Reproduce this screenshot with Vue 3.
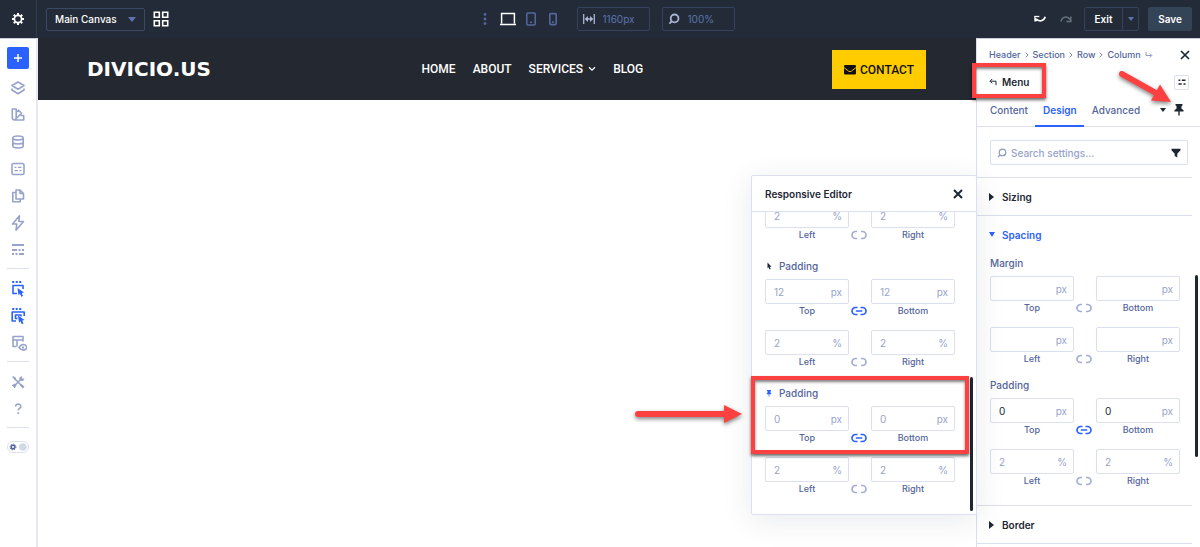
<template>
  <div class="builder">
    <header class="topbar">
      <button class="topbar__settings" aria-label="Settings">
        <svg width="14" height="14" viewBox="0 0 14 14">
          <circle cx="7" cy="7" r="3.6" fill="none" stroke="#fff" stroke-width="1.7" />
          <path d="M7 1v2M7 11v2M1 7h2M11 7h2M2.8 2.8l1.4 1.4M9.8 9.8l1.4 1.4M2.8 11.2l1.4-1.4M9.8 4.2l1.4-1.4" stroke="#fff" stroke-width="2" />
        </svg>
      </button>
      <div class="canvas-select">
        <select v-model="canvas" aria-label="Canvas">
          <option>Main Canvas</option>
        </select>
        <i class="caret"></i>
      </div>
      <button class="icon-btn" aria-label="Grid view">
        <svg width="16" height="16" viewBox="0 0 16 16" fill="none" stroke="#fff" stroke-width="1.6">
          <path d="M1.3 1.3h5v5h-5zM9.7 1.3h5v5h-5zM1.3 9.7h5v5h-5zM9.7 9.7h5v5h-5z" />
        </svg>
      </button>

      <div class="topbar__view">
        <button class="icon-btn" aria-label="More">
          <svg width="4" height="14" viewBox="0 0 4 14" fill="#5468a0">
            <circle cx="2" cy="2.4" r="1.4" /><circle cx="2" cy="7" r="1.4" /><circle cx="2" cy="11.6" r="1.4" />
          </svg>
        </button>
        <button class="icon-btn icon-btn--desktop" aria-label="Desktop">
          <svg width="16" height="14" viewBox="0 0 16 14" fill="none" stroke="#fff" stroke-width="1.5">
            <path d="M1.6 11.5v-10h12.8v10M0 12.6h16" />
          </svg>
        </button>
        <button class="icon-btn icon-btn--tablet" aria-label="Tablet">
          <svg width="10" height="14" viewBox="0 0 10 14" fill="none" stroke="#5468a0" stroke-width="1.5">
            <rect x="0.8" y="1" width="8.4" height="12" rx="1" /><path d="M4 10.2h2" />
          </svg>
        </button>
        <button class="icon-btn icon-btn--phone" aria-label="Phone">
          <svg width="8" height="14" viewBox="0 0 8 14" fill="none" stroke="#5468a0" stroke-width="1.6">
            <rect x="0.8" y="1.6" width="6.4" height="11" rx="1" /><path d="M3 10h2" />
          </svg>
        </button>
        <label class="measure">
          <svg width="12" height="12" viewBox="0 0 12 12" fill="none" stroke="#aab4d4" stroke-width="1.3">
            <path d="M.7 1v10M11.3 1v10M3 6h6" /><path d="M5 3L1.600 6 5 9zM7 3l3.400 3L7 9z" fill="#aab4d4" stroke="none" />
          </svg>
          <input v-model="width" aria-label="Canvas width" />
        </label>
        <label class="measure">
          <svg width="12" height="12" viewBox="0 0 12 12" fill="none" stroke="#aab4d4" stroke-width="1.8">
            <circle cx="6.6" cy="5.4" r="3.9" /><path d="M4 8L1.4 10.6" />
          </svg>
          <input v-model="zoom" aria-label="Zoom" />
        </label>
      </div>

      <div class="topbar__actions">
        <button class="icon-btn" aria-label="Undo">
          <svg width="12" height="10" viewBox="0 0 12 10">
            <path d="M2.200 5C5 8 9.500 7.500 11.300 2.800" fill="none" stroke="#fff" stroke-width="1.700" /><path d="M.3 2v5.500h1.800L4.800 5.800 2.200 4.500z" fill="#fff" />
            <path d="M.3 2.500h5" stroke="#fff" stroke-width="1.300" />
          </svg>
        </button>
        <button class="icon-btn" aria-label="Redo">
          <svg width="12" height="10" viewBox="0 0 12 10">
            <path d="M.8 7.5C2.500 2 7.500 2 10 5.5" fill="none" stroke="#6b7482" stroke-width="1.500" /><path d="M10.800 2.500v5H6.500" fill="none" stroke="#6b7482" stroke-width="1.400" />
          </svg>
        </button>
        <div class="exit">
          <button class="exit__main">Exit</button>
          <button class="exit__more" aria-label="Exit options"><i class="caret caret--small"></i></button>
        </div>
        <button class="save">Save</button>
      </div>
    </header>

    <div class="workspace">
      <aside class="rail">
        <button class="rail__add" aria-label="Add">
          <svg width="10" height="10" viewBox="0 0 10 10" stroke="#fff" stroke-width="1.5"><path d="M5 1v8M1 5h8" /></svg>
        </button>
        <div v-for="(group, g) in railGroups" :key="g" class="rail__group">
          <button v-for="item in group" :key="item.name" class="rail__btn" :class="{ 'rail__btn--on': item.on }" :aria-label="item.name">
            <svg width="18" height="18" viewBox="0 0 18 18">
              <path v-if="item.line" :d="item.line" class="line" />
              <path v-if="item.fill" :d="item.fill" class="fill" />
            </svg>
          </button>
        </div>
        <button class="rail__toggle" aria-label="Dark mode">
          <svg width="20" height="10" viewBox="0 0 20 10">
            <circle cx="5" cy="5" r="1.8" fill="none" stroke="#5468a0" stroke-width="1.5" />
            <circle cx="5" cy="5" r="2.900" fill="none" stroke="#5468a0" stroke-width="1" stroke-dasharray="1.2 1.1" />
            <circle cx="14.800" cy="5" r="3.800" fill="#d3d8e8" />
          </svg>
        </button>
      </aside>

      <main class="canvas">
        <div class="site-header">
          <a href="#" class="site-logo">DIVICIO.US</a>
          <nav class="site-nav">
            <a href="#">HOME</a>
            <a href="#">ABOUT</a>
            <a href="#">
              SERVICES
              <svg width="8" height="6" viewBox="0 0 8 6" fill="none" stroke="#fff" stroke-width="1.3"><path d="M1 1.2l3 3 3-3" /></svg>
            </a>
            <a href="#">BLOG</a>
          </nav>
          <a href="#" class="site-contact">
            <svg width="12" height="10" viewBox="0 0 12 10">
              <rect width="12" height="9.5" rx="1.3" fill="#111" />
              <path d="M0 2.6L4.7 6.200q1.300.9 2.600 0L12 2.600" fill="none" stroke="#ffcc00" stroke-width="0.9" />
            </svg>
            CONTACT
          </a>
        </div>
      </main>

      <aside class="panel">
        <div class="panel__crumbs">
          <template v-for="(crumb, i) in crumbs" :key="crumb">
            <svg v-if="i" width="4" height="6" viewBox="0 0 4 6" fill="none" stroke="#7d8ab5"><path d="M.8.7L3 3 .8 5.300" /></svg>
            <a href="#">{{ crumb }}</a>
          </template>
          <svg class="crumb-end" width="8" height="8" viewBox="0 0 8 8" fill="none" stroke="#8e9ac2"><path d="M1 1v3.500h5.500M4.800 2.500l2 2-2 2" /></svg>
          <button class="icon-btn panel__close" aria-label="Close">
            <svg width="10" height="10" viewBox="0 0 10 10" stroke="#1d2733" stroke-width="1.7"><path d="M1 1l8 8M9 1L1 9" /></svg>
          </button>
        </div>

        <div class="panel__title">
          <button class="panel__back">
            <svg width="8" height="8" viewBox="0 0 8 8" fill="none" stroke="#1d2733"><path d="M7 7.2V3.200H1.300M3.200 1L1 3.200l2.200 2.200" /></svg>
            Menu
          </button>
          <button class="panel__presets" aria-label="Presets">
            <svg width="8" height="8" viewBox="0 0 8 8" stroke="#1d2733" stroke-width="1.4"><path d="M.5 2.200h1.800M3.800 2.200h3.700M.5 6h3.200M5.500 6h2" /></svg>
          </button>
          <div class="mark mark--menu"></div>
        </div>

        <div class="tabs">
          <button v-for="tab in tabs" :key="tab" class="tabs__tab" :class="{ 'tabs__tab--active': tab === activeTab }" @click="activeTab = tab">
            {{ tab }}
          </button>
          <button class="icon-btn tabs__pin" aria-label="State">
            <i class="caret caret--dark"></i>
            <svg width="10" height="12" viewBox="0 0 10 12" fill="#1d2733"><path d="M1.500 0h7v1.500l-1 .5v2.800L9.500 6v1.600H5.700V11L5 12l-.7-1V7.600H.5V6l2-1.200V2l-1-.5z" /></svg>
          </button>
        </div>

        <div class="search-wrap">
          <label class="search">
            <svg width="10" height="10" viewBox="0 0 10 10" fill="none" stroke="#8e9ac2" stroke-width="1.2"><circle cx="5.5" cy="4.4" r="3.3" /><path d="M3.200 6.800L1 9" /></svg>
            <input v-model="query" placeholder="Search settings..." aria-label="Search settings" />
            <svg width="10" height="10" viewBox="0 0 10 10" fill="#1d2733"><path d="M.5.8h9v1.400L6.300 5.800v3.700L3.700 8V5.800L.5 2.200z" /></svg>
          </label>
        </div>

        <section class="group">
          <button class="group__head"><i class="arrow"></i>Sizing</button>
        </section>

        <section class="group">
          <button class="group__head group__head--open"><i class="arrow arrow--down"></i>Spacing</button>
          <div class="group__body">
            <div v-for="block in panelBlocks" :key="block.id" class="block">
              <div class="block__label">{{ block.title }}</div>
              <div v-for="(row, r) in block.rows" :key="r" class="pair">
                <div v-for="field in row.fields" :key="field.name" class="field">
                  <div class="field__box">
                    <input :id="block.id + field.name" v-model="field.value" :placeholder="field.hint" />
                    <span>{{ row.unit }}</span>
                  </div>
                  <label :for="block.id + field.name">{{ field.name }}</label>
                </div>
                <button class="pair__link" :class="{ 'pair__link--on': row.linked }" aria-label="Link values" @click="row.linked = !row.linked">
                  <svg width="16" height="10" viewBox="0 0 16 10"><path :d="row.linked ? linkOn : linkOff" /></svg>
                </button>
              </div>
            </div>
          </div>
        </section>

        <section class="group">
          <button class="group__head"><i class="arrow"></i>Border</button>
        </section>
        <div class="scrollbar scrollbar--panel"></div>
      </aside>

      <div class="editor" role="dialog" aria-label="Responsive Editor">
        <div class="editor__head">
          <h2>Responsive Editor</h2>
          <button class="icon-btn" aria-label="Close editor">
            <svg width="10" height="10" viewBox="0 0 10 10" stroke="#1d2733" stroke-width="2"><path d="M1 1l8 8M9 1L1 9" /></svg>
          </button>
        </div>
        <div class="editor__body">
          <div v-for="block in editorBlocks" :key="block.id" class="block">
            <div v-if="block.title" class="block__label block__label--state">
              <svg v-if="block.state === 'hover'" width="8" height="8" viewBox="0 0 8 8" fill="#1d2733"><path d="M2.500.5l4 4.200-1.800.1 1 2.200-1.200.6-1-2.300-1 .9z" /></svg>
              <svg v-else width="8" height="8" viewBox="0 0 8 8" fill="#2b62ff"><path d="M2 1h4v.9l-.5.3v1.500l.8.7v.8H4.400V7.500h-.8V5.200H1.700v-.8l.8-.7V2.200L2 1.900z" /></svg>
              {{ block.title }}
            </div>
            <div v-for="(row, r) in block.rows" :key="r" class="pair">
              <div v-for="field in row.fields" :key="field.name" class="field">
                <div class="field__box">
                  <input :id="block.id + field.name" v-model="field.value" :placeholder="field.hint" />
                  <span>{{ row.unit }}</span>
                </div>
                <label :for="block.id + field.name">{{ field.name }}</label>
              </div>
              <button class="pair__link" :class="{ 'pair__link--on': row.linked }" aria-label="Link values" @click="row.linked = !row.linked">
                <svg width="16" height="10" viewBox="0 0 16 10"><path :d="row.linked ? linkOn : linkOff" /></svg>
              </button>
            </div>
          </div>
        </div>
        <div class="scrollbar scrollbar--editor"></div>
        <div class="mark mark--padding"></div>
        <svg class="pointer pointer--padding" width="112" height="24" viewBox="0 0 112 24">
          <path d="M5 12h87" stroke="#fd4040" stroke-width="6" stroke-linecap="round" /><path d="M91 3l18 9-18 9z" fill="#fd4040" />
        </svg>
      </div>

      <svg class="pointer pointer--pin" width="60" height="40" viewBox="0 0 60 40">
        <path d="M7 6l34 19" stroke="#fd4040" stroke-width="6" stroke-linecap="round" /><path d="M56 34l-20-1.500 9-16z" fill="#fd4040" />
      </svg>
    </div>
  </div>
</template>

<script setup>
import { ref } from 'vue'

const canvas = ref('Main Canvas')
const width = ref('1160px')
const zoom = ref('100%')
const query = ref('')
const activeTab = ref('Design')

const crumbs = ['Header', 'Section', 'Row', 'Column']
const tabs = ['Content', 'Design', 'Advanced']

const linkOn = 'M6.500 1.500H4.500a3.500 3.500 0 0 0 0 7h2M9.500 1.500h2a3.500 3.500 0 0 1 0 7h-2M4.800 5h6.400'
const linkOff = 'M6 1.500H4.500a3.500 3.500 0 0 0 0 7H6M10 1.500h1.500a3.500 3.500 0 0 1 0 7H10'

const makeRow = (names, unit, linked = false, hint = '', value = '') => ({
  unit,
  linked,
  fields: names.map((name) => ({ name, hint, value })),
})

const vertical = ['Top', 'Bottom']
const horizontal = ['Left', 'Right']

const panelBlocks = ref([
  { id: 'margin', title: 'Margin', rows: [makeRow(vertical, 'px'), makeRow(horizontal, 'px')] },
  { id: 'padding', title: 'Padding', rows: [makeRow(vertical, 'px', true, '', '0'), makeRow(horizontal, '%', false, '2')] },
])

const editorBlocks = ref([
  { id: 'base', rows: [makeRow(horizontal, '%', false, '2')] },
  { id: 'hover', title: 'Padding', state: 'hover', rows: [makeRow(vertical, 'px', true, '12'), makeRow(horizontal, '%', false, '2')] },
  { id: 'sticky', title: 'Padding', state: 'sticky', rows: [makeRow(vertical, 'px', true, '0'), makeRow(horizontal, '%', false, '2')] },
])

const railGroups = [
  [
    { name: 'Layers', line: 'M9 3l6 3.500-6 3.700-6-3.700zM3 9.500v1.500l6 3.800 6-3.800V9.500' },
    { name: 'Presets', line: 'M3.300 3h3.900v9.300a2 2 0 0 1-3.900 0zM7.200 6.500l2.300-2.300 3 3-5 5M11.500 9.500h3.200V14H5.500' },
    { name: 'Variables', line: 'M3.800 5c0-2.600 10.400-2.600 10.400 0s-10.400 2.600-10.400 0v8c0 2.600 10.400 2.600 10.400 0V5M3.800 9c0 2.600 10.400 2.600 10.400 0' },
    { name: 'Attributes', line: 'M4.500 3.500h9a1.500 1.500 0 0 1 1.500 1.500v8a1.500 1.500 0 0 1-1.500 1.500h-9A1.500 1.500 0 0 1 3 13V5a1.500 1.500 0 0 1 1.500-1.500z', fill: 'M5.500 6.700h2v1.300h-2zM9 6.700h3.500v1.300H9zM5.500 10h3.500v1.300H5.500zM10.500 10h2v1.300h-2z' },
    { name: 'Pages', line: 'M7 3h4l3.500 3.500V12H7zM11 3v3.500h3.500M7 5.500H3.800v9.300h7.400V12' },
    { name: 'Quick actions', line: 'M10.500 1.800L3.500 10h4.300l-.8 6.300L14.500 7.500H9.800z' },
    { name: 'Filters', fill: 'M3 3h12v2H3zM3 8h5v2H3zM9.500 8h2v2h-2zM13 8h2v2h-2zM3 12h2v2H3zM6.500 12h2v2h-2zM10 12h5v2h-5z' },
  ],
  [
    { name: 'Select', on: true, line: 'M8 13.500H4v-8h10V9', fill: 'M3.200 1h2v2h-2zM6.700 1h2v2h-2zM10.200 1h2v2h-2zM8.500 8l6.500 4.500-2.300.5 1.300 3-1.700.7-1.300-3-1.500 1.600z' },
    { name: 'Select nested', on: true, line: 'M7 14H3.200V5h12v4M8.500 11.500H6.500V8h5.500v1.500', fill: 'M3.200 1h2v2h-2zM6.700 1h2v2h-2zM10.200 1h2v2h-2zM9 8.500l6.500 4.500-2.300.5 1.300 3-1.700.7-1.300-3-1.500 1.600z' },
    { name: 'Wireframe', line: 'M7.500 12.500H4v-10h10v5M4 6h10M8 6v6.500M10 13.500c2.500-4 6.500-4 8 0-1.500 3.500-5.500 3.500-8 0z', fill: 'M13 12.500h2v2h-2z' },
  ],
  [
    { name: 'Tools', line: 'M5.500 5.500l7 7M4.500 13.700L12 6.200', fill: 'M3.200 4l1.300-1 2.500 2v1.500H5.500zM10.500 4.500L13 3v2.500h2.500L14 8l-2.500-.2L10.300 6.500zM3 12l3-1.500 1.500 1.800L6 15H4.800v-2H3zM11 12.500l1.600-1.600 3 2.800-1.800 1.800z' },
    { name: 'Help', line: 'M6.600 6.600c0-3.400 5.400-3.300 5.200 0-.1 1.900-2.600 1.800-2.600 4', fill: 'M8.300 12.300h1.800v1.700H8.300z' },
  ],
]
</script>

<style>
body {
  background: #fff;
}
</style>

<style scoped>
.builder {
  min-height: 100vh;
  display: flex;
  flex-direction: column;
  font-family: Inter, "Liberation Sans", sans-serif;
  font-size: 10px;
  line-height: 14px;
  color: #53659b;
}

* {
  box-sizing: border-box;
}

button,
input,
select {
  margin: 0;
  padding: 0;
  border: 0;
  background: none;
  font: inherit;
  color: inherit;
}

button {
  cursor: pointer;
}

input {
  min-width: 0;
  width: 100%;
  outline: none;
}

a {
  color: inherit;
  text-decoration: none;
}

svg {
  display: block;
  flex: none;
}

.icon-btn {
  display: flex;
  align-items: center;
}

.caret {
  border: 4px solid transparent;
  border-top: 5px solid #5f74ad;
  border-bottom: 0;
}

.caret--small {
  border-width: 4px 3px 0;
}

.caret--dark {
  border-width: 4px 3px 0;
  border-top-color: #1d2733;
}

/* top bar */
.topbar {
  display: flex;
  align-items: center;
  height: 38px;
  padding-right: 8px;
  background: #222b37;
  color: #fff;
}

.topbar__settings {
  display: flex;
  align-items: center;
  justify-content: center;
  width: 37px;
  height: 38px;
  border-right: 1px solid #2f3a4c;
}

.canvas-select {
  display: flex;
  align-items: center;
  width: 99px;
  height: 23px;
  margin: 0 8px 0 9px;
  padding: 0 8px;
  border: 1px solid #3a4966;
  border-radius: 2px;
  font-weight: 500;
}

.canvas-select select {
  flex: 1;
  min-width: 0;
  appearance: none;
  outline: none;
}

.topbar__view {
  display: flex;
  align-items: center;
  margin: 0 auto;
  padding-left: 14px;
}

.icon-btn--desktop {
  margin: 0 10px 0 13px;
}

.icon-btn--tablet {
  margin-right: 13px;
}

.icon-btn--phone {
  margin-right: 20px;
}

.measure {
  display: flex;
  align-items: center;
  gap: 8px;
  width: 73px;
  height: 24px;
  padding: 0 5px;
  border: 1px solid #34425c;
  border-radius: 2px;
  color: #5f74ad;
}

.measure + .measure {
  margin-left: 12px;
}

.topbar__actions {
  display: flex;
  align-items: center;
  font-weight: 600;
}

.topbar__actions .icon-btn {
  margin-right: 14px;
}

.topbar__actions .icon-btn + .icon-btn {
  margin-right: 12px;
}

.exit {
  display: flex;
  height: 24px;
  margin-right: 9px;
  border: 1px solid #34425c;
  border-radius: 2px;
}

.exit__main {
  width: 37px;
}

.exit__more {
  display: flex;
  align-items: center;
  justify-content: center;
  width: 16px;
  border-left: 1px solid #34425c;
}

.save {
  width: 44px;
  height: 24px;
  border-radius: 2px;
  background: #344457;
}

/* left rail */
.workspace {
  position: relative;
  flex: 1;
  display: flex;
}

.rail {
  display: flex;
  flex-direction: column;
  align-items: center;
  width: 38px;
  padding-top: 8px;
  border-top: 1px solid #c9ccd6;
  border-right: 2px solid #e6e8f3;
  background: #fff;
}

.rail__add {
  display: flex;
  align-items: center;
  justify-content: center;
  width: 22px;
  height: 22px;
  margin-bottom: 8px;
  border-radius: 2px;
  background: #2b62ff;
}

.rail__group {
  display: flex;
  flex-direction: column;
  align-items: center;
  gap: 5px;
  width: 22px;
  margin-bottom: 9px;
  padding-bottom: 7px;
  border-bottom: 1px solid #dcdfee;
}

.rail__btn {
  display: flex;
  align-items: center;
  justify-content: center;
  height: 22px;
  color: #97a3cb;
}

.rail__btn--on {
  color: #2b62ff;
}

.rail__btn .line {
  fill: none;
  stroke: currentColor;
  stroke-width: 1.6;
  stroke-linejoin: round;
}

.rail__btn .fill {
  fill: currentColor;
}

.rail__toggle {
  margin-top: 4px;
  border: 1px solid #dcdfee;
  border-radius: 7px;
}

/* page being edited */
.canvas {
  flex: 1;
  min-width: 0;
}

.site-header {
  display: flex;
  align-items: center;
  height: 62px;
  padding: 0 50px 0 49px;
  background: #242830;
  font-family: Roboto, "Liberation Sans", sans-serif;
  font-size: 12px;
  font-weight: 500;
  color: #fff;
}

.site-logo {
  font-family: "DejaVu Sans", sans-serif;
  font-size: 20px;
  font-weight: 700;
  line-height: 24px;
}

.site-nav {
  flex: 1;
  display: flex;
  justify-content: center;
  gap: 17px;
  padding-left: 22px;
}

.site-nav a {
  display: flex;
  align-items: center;
  gap: 5px;
}

.site-contact {
  display: flex;
  align-items: center;
  gap: 4px;
  height: 39px;
  padding: 2px 12px 0;
  background: #ffcc00;
  color: #111;
}

/* settings panel */
.panel {
  position: relative;
  width: 224px;
  border-top: 1px solid #c9ccd6;
  border-left: 1px solid #dcdfee;
  background: #fff;
  font-weight: 500;
}

.panel__crumbs {
  display: flex;
  align-items: center;
  gap: 4px;
  height: 31px;
  padding: 0 10px 0 12px;
  font-size: 9px;
}

.panel__close {
  margin-left: auto;
}

.panel__title {
  position: relative;
  display: flex;
  align-items: center;
  justify-content: space-between;
  height: 24px;
  padding: 0 11px 0 12px;
}

.panel__back {
  display: flex;
  align-items: center;
  gap: 5px;
  font-weight: 600;
  color: #1d2733;
}

.panel__presets {
  display: flex;
  align-items: center;
  justify-content: center;
  width: 15px;
  height: 15px;
  border: 1px solid #dcdfee;
  border-radius: 2px;
}

.tabs {
  display: flex;
  height: 33px;
  padding: 0 16px 0 5px;
  border-bottom: 1px solid #dcdfee;
}

.tabs__tab {
  height: 33px;
  padding: 0 7px 0 8px;
  border-bottom: 2px solid transparent;
}

.tabs__tab--active {
  border-color: #2b62ff;
  font-weight: 600;
  color: #2b62ff;
}

.tabs__pin {
  gap: 8px;
  margin-left: auto;
}

.search-wrap {
  padding: 13px 12px 12px 13px;
}

.search {
  display: flex;
  align-items: center;
  gap: 4px;
  height: 25px;
  padding: 0 6px;
  border: 1px solid #dcdfee;
  border-radius: 2px;
}

input::placeholder {
  color: #97a3cb;
  opacity: 1;
}

.group {
  margin-right: 8px;
  border-top: 1px solid #dcdfee;
}

.group:last-of-type {
  border-bottom: 1px solid #dcdfee;
}

.group__head {
  display: flex;
  align-items: center;
  gap: 7px;
  width: 100%;
  height: 37px;
  padding-left: 12px;
  font-weight: 600;
  color: #1d2733;
}

.group__head--open {
  color: #2b62ff;
}

.arrow {
  width: 6px;
  height: 8px;
  border: 4px solid transparent;
  border-left: 5px solid #1d2733;
  border-right: 0;
}

.arrow--down {
  height: 5px;
  border: 3px solid transparent;
  border-top: 5px solid #2b62ff;
  border-bottom: 0;
}

.group__body {
  display: grid;
  gap: 12px;
  padding: 3px 12px 17px 13px;
}

/* paired value fields */
.block {
  display: grid;
  gap: 12px;
}

.block__label {
  margin-bottom: -6px;
}

.block__label--state {
  display: flex;
  align-items: center;
  gap: 6px;
}

.pair {
  position: relative;
  display: grid;
  grid-template-columns: 1fr 1fr;
  gap: 22px;
}

.field label {
  display: block;
  font-size: 9px;
  text-align: center;
}

.field__box {
  display: flex;
  align-items: center;
  height: 25px;
  padding: 0 6px 0 8px;
  border: 1px solid #dcdfee;
  border-radius: 2px;
  font-weight: 400;
  color: #1d2733;
}

.field__box span {
  color: #97a3cb;
}

.pair__link {
  position: absolute;
  bottom: 2px;
  left: 50%;
  margin-left: -9px;
}

.pair__link path {
  fill: none;
  stroke: #a3aed2;
  stroke-width: 1.7;
}

.pair__link--on path {
  stroke: #2b62ff;
}

.scrollbar {
  position: absolute;
  width: 3px;
  border-radius: 2px;
  background: #1d2733;
}

.scrollbar--panel {
  top: 236px;
  right: 2px;
  height: 182px;
}

/* responsive editor popup */
.editor {
  position: absolute;
  top: 137px;
  right: 223px;
  width: 226px;
  border: 1px solid #dcdfee;
  border-radius: 2px;
  background: #fff;
  box-shadow: 0 6px 30px rgba(43, 50, 80, 0.1);
  font-weight: 500;
}

.editor__head {
  display: flex;
  align-items: center;
  justify-content: space-between;
  height: 36px;
  padding: 0 13px;
  border-bottom: 1px solid #dcdfee;
  color: #1d2733;
}

.editor__head h2 {
  margin: 0;
  font-size: 10px;
  font-weight: 600;
}

.editor__body {
  display: flex;
  flex-direction: column;
  justify-content: flex-end;
  gap: 17px;
  height: 302px;
  padding: 0 21px 18px 13px;
  overflow: hidden;
}

.scrollbar--editor {
  right: 3px;
  bottom: 3px;
  height: 134px;
}

/* callouts */
.mark {
  position: absolute;
  border: 4px solid #fd4040;
  box-shadow: 0 2px 3px rgba(0, 0, 0, 0.6), inset 0 2px 3px rgba(0, 0, 0, 0.5);
  pointer-events: none;
}

.mark--menu {
  top: -7px;
  left: -5px;
  width: 74px;
  height: 35px;
}

.mark--padding {
  right: 7px;
  bottom: 60px;
  left: -1px;
  height: 78px;
}

.pointer {
  position: absolute;
  overflow: visible;
  filter: drop-shadow(0 2px 2px rgba(0, 0, 0, 0.5));
  pointer-events: none;
}

.pointer--padding {
  right: 231px;
  bottom: 88px;
}

.pointer--pin {
  top: 30px;
  right: 25px;
}
</style>
